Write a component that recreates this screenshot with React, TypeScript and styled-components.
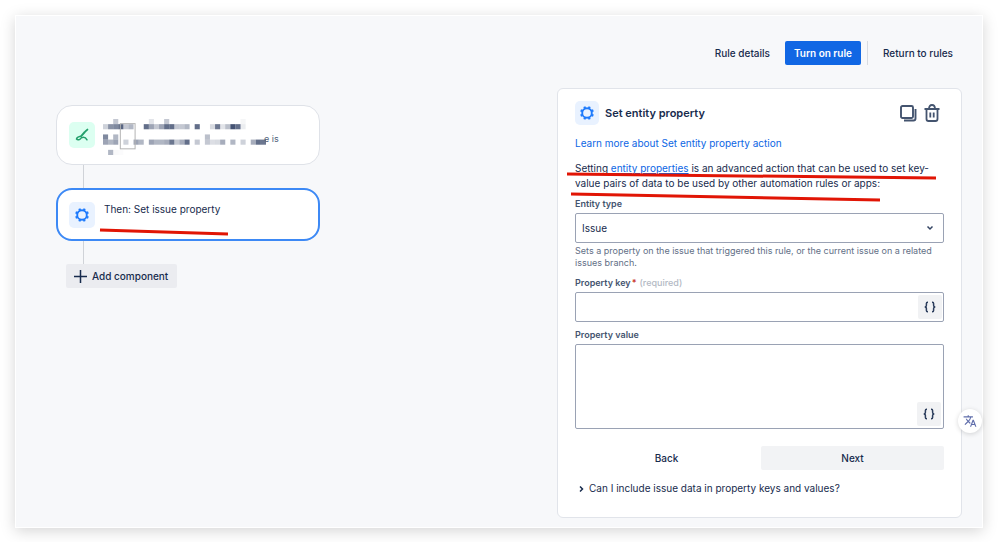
import React from 'react';
import styled, { createGlobalStyle, css } from 'styled-components';
import { MdTranslate } from 'react-icons/md';

const GlobalStyle = createGlobalStyle`
  * { box-sizing: border-box; }
  body {
    margin: 0;
    background: #fff;
    color: #172b4d;
    font: 400 10px/15px Inter, "Liberation Sans", sans-serif;
  }
  button, input, select, textarea { font: inherit; color: inherit; }
`;

const Frame = styled.div`
  position: relative;
  margin: 15px;
  padding: 25px 20px 9px 40px;
  border: 1px solid #fff;
  background: #f7f8fa;
  box-shadow: 0 3px 14px rgba(0, 0, 0, 0.17);
`;

const Toolbar = styled.header`
  display: flex;
  justify-content: flex-end;
  gap: 6px;
  margin-bottom: 23px;
`;

const buttonBase = css`
  display: inline-flex;
  align-items: center;
  justify-content: center;
  height: 24px;
  padding: 0 9px;
  border: 0;
  border-radius: 2px;
  font-weight: 500;
  white-space: nowrap;
  cursor: pointer;
`;

const Button = styled.button<{ $tone?: 'primary' | 'muted' }>`
  ${buttonBase}
  background: ${(p) => (p.$tone === 'primary' ? '#1167e4' : p.$tone === 'muted' ? '#f2f3f5' : 'transparent')};
  color: ${(p) => (p.$tone === 'primary' ? '#fff' : '#172b4d')};
  font-weight: ${(p) => (p.$tone === 'primary' ? 600 : 500)};
`;

const Divider = styled.span`
  width: 1px;
  background: #d8dbe1;
`;

const Columns = styled.main`
  display: grid;
  grid-template-columns: minmax(0, 1fr) 405px;
  align-items: start;
`;

const Chain = styled.section`
  display: flex;
  flex-direction: column;
  align-items: flex-start;
  width: 264px;
  padding-top: 17px;
`;

const StepCard = styled.article<{ $selected?: boolean }>`
  position: relative;
  display: flex;
  align-items: center;
  gap: 9px;
  width: 100%;
  height: ${(p) => (p.$selected ? 53 : 60)}px;
  padding-left: ${(p) => (p.$selected ? 11 : 12)}px;
  border: ${(p) => (p.$selected ? '2px solid #3d89f5' : '1px solid #dfe2e8')};
  border-radius: 16px;
  background: #fff;
`;

const Tile = styled.span<{ $green?: boolean; $small?: boolean }>`
  display: grid;
  place-items: center;
  flex: none;
  width: ${(p) => (p.$small ? 24 : 26)}px;
  height: ${(p) => (p.$small ? 24 : 26)}px;
  border-radius: 5px;
  background: ${(p) => (p.$green ? '#dcfff1' : '#e9f2ff')};
`;

const StepText = styled.span`
  margin-bottom: 10px;
`;

const Connector = styled.span`
  width: 1px;
  height: 23px;
  margin-left: 27px;
  background: #d0d3d8;
`;

const AddButton = styled.button`
  ${buttonBase}
  gap: 5px;
  margin-left: 10px;
  padding: 0 9px 0 8px;
  background: #ebecf0;
`;

const Redacted = styled.span`
  display: flex;
  align-items: center;
  margin: 4px 0 0 -1px;
  color: #505f79;
  font-size: 9px;
  line-height: 12px;
`;

const Remainder = styled.span`
  margin-left: -2px;
  padding-top: 4px;
`;

const Ink = styled.svg<{ $x: number; $y: number }>`
  position: absolute;
  left: ${(p) => p.$x}px;
  top: ${(p) => p.$y}px;
  overflow: visible;
  pointer-events: none;
`;

const Panel = styled.section`
  position: relative;
  padding: 12px 17px 21px;
  border: 1px solid #e1e4ea;
  border-radius: 6px;
  background: #fff;
`;

const PanelHead = styled.div`
  display: flex;
  align-items: center;
  gap: 6px;
  padding-right: 3px;
`;

const Title = styled.h1`
  flex: 1;
  margin: 0;
  font-size: 11px;
  line-height: 16px;
  font-weight: 600;
`;

const IconButton = styled.button`
  display: grid;
  place-items: center;
  width: 18px;
  height: 20px;
  padding: 0;
  border: 0;
  background: none;
  color: #44546f;
`;

const Link = styled.a<{ $underlined?: boolean }>`
  color: #0c66e4;
  text-decoration: ${(p) => (p.$underlined ? 'underline' : 'none')};
`;

const Text = styled.p`
  margin: 11px 0 0;
`;

const Intro = styled(Text)`
  margin-top: 10px;
`;

const Label = styled.label`
  display: block;
  margin: 7px 0 3px;
  color: #44546f;
  font-size: 9px;
  line-height: 12px;
  font-weight: 600;
`;

const Required = styled.span`
  margin: 0 3px 0 1px;
  color: #c9372c;
`;

const Hint = styled.span`
  color: #b3b9c4;
  font-weight: 500;
`;

const Help = styled.p`
  margin: 2px 0 8px;
  color: #626f86;
  font-size: 9px;
  line-height: 12px;
`;

const Field = styled.div<{ $tall?: boolean }>`
  display: flex;
  align-items: ${(p) => (p.$tall ? 'flex-end' : 'center')};
  height: ${(p) => (p.$tall ? 85 : 30)}px;
  padding: ${(p) => (p.$tall ? 2 : 1)}px;
  border: 1px solid #9aa2b4;
  border-radius: 2px;
  background: #fff;
`;

const inputBase = css`
  flex: 1;
  min-width: 0;
  align-self: stretch;
  border: 0;
  padding: 0 5px;
  background: none;
  outline: none;
`;

const Input = styled.input`${inputBase}`;
const TextArea = styled.textarea`
  ${inputBase}
  resize: none;
`;
const Select = styled.select`
  ${inputBase}
  appearance: none;
`;

const SelectArrow = styled.svg`
  flex: none;
  margin-right: 8px;
  pointer-events: none;
`;

const BraceButton = styled.button`
  display: grid;
  place-items: center;
  width: 24px;
  height: 24px;
  padding: 0;
  border: 0;
  border-radius: 2px;
  background: #f1f2f4;
`;

const Actions = styled.div`
  display: grid;
  grid-template-columns: 1fr 1fr;
  gap: 3px;
  margin-top: 17px;
`;

const Disclosure = styled.button`
  display: flex;
  align-items: center;
  gap: 5px;
  margin-top: 11px;
  padding: 0 4px;
  border: 0;
  background: none;
`;

const TranslateButton = styled.button`
  position: absolute;
  right: 0;
  top: 393px;
  display: grid;
  place-items: center;
  width: 24px;
  height: 24px;
  padding: 0;
  border: 0;
  border-radius: 50%;
  background: #fff;
  color: #5f6dab;
  box-shadow: 0 1px 5px rgba(0, 0, 0, 0.16);
`;

const TEETH = [22.5, 67.5, 112.5, 157.5, 202.5, 247.5, 292.5, 337.5];

function Gear() {
  return (
    <svg width="16" height="16" viewBox="0 0 16 16" fill="none" stroke="#1d7afc" aria-hidden="true">
      <circle cx="8" cy="8" r="4.8" strokeWidth="1.9" />
      {TEETH.map((a) => (
        <path key={a} d="M8 3V1.1" strokeWidth="2.2" transform={`rotate(${a} 8 8)`} />
      ))}
    </svg>
  );
}

function Brush() {
  return (
    <svg width="14" height="14" viewBox="0 0 14 14" fill="none" stroke="#22a06b" strokeLinecap="round" aria-hidden="true">
      <path d="M12.4 1.6 10.4 3.4M9.8 4 6.6 7.6" strokeWidth="1.9" />
      <path d="M6.4 8C4.6 8.4 1.6 9.4 1.5 11C2.6 12.4 5.4 11.8 6.3 9.8C8.6 8.8 10.8 9.6 12 11.8" strokeWidth="1.5" />
    </svg>
  );
}

function Braces() {
  return (
    <svg width="12" height="12" viewBox="0 0 12 12" fill="none" stroke="#2c3e5d" strokeWidth="1.5" aria-hidden="true">
      <path d="M4 1.2H3.6Q2.4 1.2 2.4 2.4V4.5Q2.4 6 0.7 6Q2.4 6 2.4 7.5V9.6Q2.4 10.8 3.6 10.8H4" />
      <path d="M8 1.2H8.4Q9.6 1.2 9.6 2.4V4.5Q9.6 6 11.3 6Q9.6 6 9.6 7.5V9.6Q9.6 10.8 8.4 10.8H8" />
    </svg>
  );
}

/* Each row: grid line, then [column, shade 0..1] pairs. */
const MOSAIC: [number, [number, number][]][] = [
  [0, [[2, 0.3], [9, 0.15], [12, 0.3], [27, 0.05]]],
  [1, [[0, 0.25], [1, 0.6], [2, 0.65], [3, 0.85], [4, 0.3], [5, 0.4], [8, 0.8], [9, 0.5], [10, 0.3], [11, 0.5], [12, 0.8], [13, 0.8], [14, 0.3], [15, 0.3], [16, 0.4], [18, 0.8], [21, 0.2], [22, 0.75], [23, 0.15], [24, 0.35], [25, 0.95], [26, 0.8], [27, 0.1]]],
  [3, [[0, 0.65], [2, 0.4], [20, 0.35]]],
  [4, [[0, 0.5], [1, 0.4], [2, 0.5], [4, 0.25], [6, 0.5], [7, 0.4], [9, 0.5], [10, 0.4], [11, 0.4], [12, 0.45], [13, 0.75], [14, 0.3], [15, 0.45], [16, 0.8], [18, 0.3], [20, 0.3], [21, 0.18], [22, 0.2], [23, 0.45], [25, 0.4], [27, 0.25], [29, 0.45], [30, 0.8], [31, 0.75]]],
  [6, [[1, 0.4], [2, 0.03], [3, 0.02]]],
];

function Mosaic() {
  return (
    <svg width="163" height="36" viewBox="0 0 32 7" preserveAspectRatio="none" aria-hidden="true">
      {MOSAIC.map(([y, cells]) =>
        cells.map(([x, o]) => <rect key={`${x}-${y}`} x={x} y={y} width="1" height="1" fill="#3b4a6b" opacity={o} />)
      )}
      <rect x="3.4" y="0.9" width="2.9" height="4.9" fill="none" stroke="#b5b5b5" strokeWidth="0.2" />
    </svg>
  );
}

export default function App() {
  return (
    <>
      <GlobalStyle />
      <Frame>
        <Toolbar>
          <Button>Rule details</Button>
          <Button $tone="primary">Turn on rule</Button>
          <Divider />
          <Button>Return to rules</Button>
        </Toolbar>
        <Columns>
          <Chain>
            <StepCard>
              <Tile $green><Brush /></Tile>
              <Redacted><Mosaic /><Remainder>e is</Remainder></Redacted>
            </StepCard>
            <Connector />
            <StepCard $selected>
              <Tile><Gear /></Tile>
              <StepText>Then: Set issue property</StepText>
              <Ink $x={42} $y={40} width="128" height="4" stroke="#e11505" strokeWidth="3" aria-hidden="true">
                <path d="M0 0 128 4" />
              </Ink>
            </StepCard>
            <Connector />
            <AddButton>
              <svg width="13" height="13" viewBox="0 0 13 13" stroke="#172b4d" strokeWidth="1.5" aria-hidden="true">
                <path d="M6.5 0V13M0 6.5H13" />
              </svg>
              Add component
            </AddButton>
          </Chain>
          <Panel>
            <PanelHead>
              <Tile $small><Gear /></Tile>
              <Title>Set entity property</Title>
              <IconButton aria-label="Duplicate">
                <svg width="17" height="17" viewBox="0 0 17 17" fill="none" stroke="currentColor" strokeWidth="1.9" aria-hidden="true">
                  <rect x="1" y="1" width="12" height="12" rx="1.5" />
                  <path d="M15.5 4V13.5Q15.5 15.5 13.5 15.5H4" />
                </svg>
              </IconButton>
              <IconButton aria-label="Delete">
                <svg width="16" height="18" viewBox="0 0 16 18" fill="none" stroke="currentColor" strokeWidth="1.8" aria-hidden="true">
                  <path d="M0.5 5H15.5M5 5Q5 1 8 1T11 5M2.5 5V15Q2.5 17 4.5 17H11.5Q13.5 17 13.5 15V5M6.3 8.5V13.5M9.7 8.5V13.5" />
                </svg>
              </IconButton>
            </PanelHead>
            <Text><Link href="#learn">Learn more about Set entity property action</Link></Text>
            <Intro>
              Setting <Link href="#properties" $underlined>entity properties</Link> is an advanced action that can be used to set key-value pairs of data to be used by other automation rules or apps:
            </Intro>
            <Label htmlFor="entity">Entity type</Label>
            <Field>
              <Select id="entity" defaultValue="Issue"><option>Issue</option></Select>
              <SelectArrow width="8" height="6" viewBox="0 0 8 6" fill="none" stroke="#344563" strokeWidth="1.5" aria-hidden="true">
                <path d="M1.5 1.5 4 4 6.5 1.5" />
              </SelectArrow>
            </Field>
            <Help>Sets a property on the issue that triggered this rule, or the current issue on a related issues branch.</Help>
            <Label htmlFor="key">Property key<Required>*</Required><Hint>(required)</Hint></Label>
            <Field>
              <Input id="key" />
              <BraceButton aria-label="Smart values"><Braces /></BraceButton>
            </Field>
            <Label htmlFor="value">Property value</Label>
            <Field $tall>
              <TextArea id="value" />
              <BraceButton aria-label="Smart values"><Braces /></BraceButton>
            </Field>
            <Actions>
              <Button>Back</Button>
              <Button $tone="muted">Next</Button>
            </Actions>
            <Disclosure aria-expanded={false}>
              <svg width="5" height="8" viewBox="0 0 5 8" fill="none" stroke="#172b4d" strokeWidth="1.5" aria-hidden="true">
                <path d="M1 1.5 3.5 4 1 6.5" />
              </svg>
              Can I include issue data in property keys and values?
            </Disclosure>
            <Ink $x={9} $y={85} width="369" height="4" stroke="#e11505" strokeWidth="3" aria-hidden="true">
              <path d="M0 0 369 4" />
            </Ink>
            <Ink $x={13} $y={105} width="309" height="6" stroke="#e11505" strokeWidth="3" aria-hidden="true">
              <path d="M0 0 309 6" />
            </Ink>
          </Panel>
        </Columns>
        <TranslateButton aria-label="Translate"><MdTranslate size={14} /></TranslateButton>
      </Frame>
    </>
  );
}
